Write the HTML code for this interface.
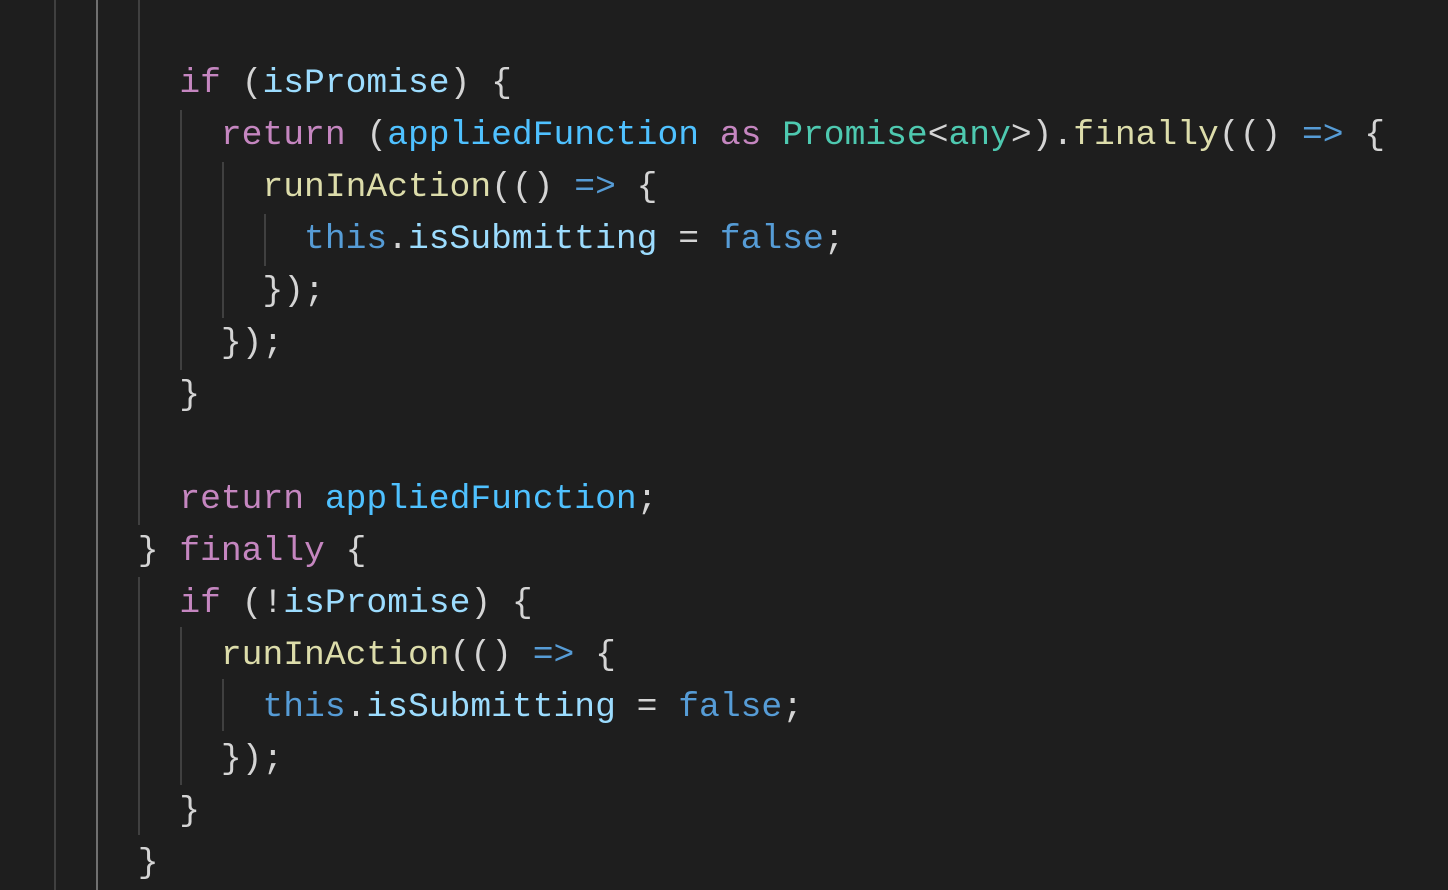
<!DOCTYPE html>
<html><head><style>
html,body{margin:0;padding:0;background:#1e1e1e;width:1448px;height:890px;overflow:hidden}
.c{position:absolute;left:13px;top:6px;font-family:"Liberation Mono",monospace;font-size:34.65px;line-height:52px;color:#d4d4d4;white-space:pre}
.g{position:absolute;width:2px;background:#404040}
.k{color:#c586c0}.v{color:#9cdcfe}.f{color:#dcdcaa}.t{color:#4ec9b0}.b{color:#569cd6}.a{color:#4fc1ff}
</style></head><body>
<div class="g" style="left:54px;top:0;height:890px"></div>
<div class="g" style="left:96px;top:0;height:890px;background:#707070"></div>
<div class="g" style="left:138px;top:0;height:525px"></div>
<div class="g" style="left:138px;top:577px;height:258px"></div>
<div class="g" style="left:180px;top:110px;height:260px"></div>
<div class="g" style="left:180px;top:627px;height:158px"></div>
<div class="g" style="left:222px;top:162px;height:156px"></div>
<div class="g" style="left:222px;top:679px;height:52px"></div>
<div class="g" style="left:264px;top:214px;height:52px"></div>
<div class="c">
        <span class="k">if</span> (<span class="v">isPromise</span>) {
          <span class="k">return</span> (<span class="a">appliedFunction</span> <span class="k">as</span> <span class="t">Promise</span>&lt;<span class="t">any</span>&gt;).<span class="f">finally</span>(() <span class="b">=&gt;</span> {
            <span class="f">runInAction</span>(() <span class="b">=&gt;</span> {
              <span class="b">this</span>.<span class="v">isSubmitting</span> = <span class="b">false</span>;
            });
          });
        }

        <span class="k">return</span> <span class="a">appliedFunction</span>;
      } <span class="k">finally</span> {
        <span class="k">if</span> (!<span class="v">isPromise</span>) {
          <span class="f">runInAction</span>(() <span class="b">=&gt;</span> {
            <span class="b">this</span>.<span class="v">isSubmitting</span> = <span class="b">false</span>;
          });
        }
      }</div>
</body></html>
